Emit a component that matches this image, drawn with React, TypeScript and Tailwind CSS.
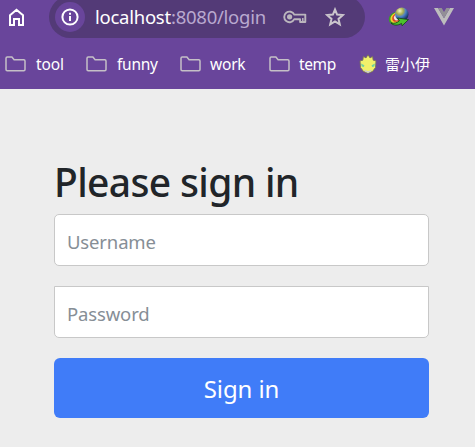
import type { ReactNode } from 'react';

const uiFont = "font-['Noto_Sans','Noto_Sans_CJK_SC',sans-serif]";

function HomeIcon() {
  return (
    <svg className="block shrink-0" width="17" height="19" viewBox="0 0 17 19" fill="none" stroke="#fff" strokeWidth="2">
      <path d="M2 7.2 8.5 1.8 15 7.2v9.8h-4v-6H6v6H2z" />
    </svg>
  );
}

function InfoIcon() {
  return (
    <svg className="block" width="18" height="18" viewBox="0 0 18 18" fill="none">
      <circle cx="9" cy="9" r="7.6" stroke="#fff" strokeWidth="2" />
      <path d="M9 7.9v5M9 4.8v1.9" stroke="#fff" strokeWidth="2" />
    </svg>
  );
}

function KeyIcon() {
  return (
    <svg className="block shrink-0" width="24" height="14" viewBox="0 0 24 14" fill="none" stroke="#bbb6bd" strokeWidth="1.9">
      <path d="M11.3 4.6h11v7.4h-5.2V9.2h-5.8A5.3 5.3 0 1 1 11.3 4.6z" strokeLinejoin="round" />
      <circle cx="6.6" cy="6.8" r="2.6" fill="#bbb6bd" stroke="none" />
      <path d="M19.8 8v4" strokeWidth="1.5" />
    </svg>
  );
}

function StarIcon() {
  return (
    <svg className="block shrink-0" width="20" height="20" viewBox="0 0 20 20" fill="none" stroke="#cac5cc" strokeWidth="2">
      <path d="m10 2.5 2.1 5.1 5.8.5-4.4 3.8 1.3 5.5-4.8-2.9-4.8 2.9 1.3-5.5-4.4-3.8 5.8-.5z" />
    </svg>
  );
}

function GlobeIcon() {
  return (
    <svg className="block shrink-0" width="22" height="20" viewBox="0 0 22 20">
      <defs>
        <radialGradient id="globe" cx="35%" cy="25%" r="75%">
          <stop offset="0" stopColor="#f2f5c8" />
          <stop offset=".35" stopColor="#a9ae50" />
          <stop offset=".6" stopColor="#4a7fc8" />
          <stop offset="1" stopColor="#142c58" />
        </radialGradient>
      </defs>
      <g fill="none">
        <ellipse cx="7.4" cy="11.4" rx="7" ry="6" transform="rotate(-40 7.4 11.4)" fill="#3d9a2a" />
        <ellipse cx="8" cy="11" rx="6" ry="5" transform="rotate(-40 8 11)" fill="#f1d52c" />
        <ellipse cx="8.7" cy="10.5" rx="4.9" ry="3.9" transform="rotate(-40 8.7 10.5)" fill="#d9452c" />
        <ellipse cx="9.4" cy="10" rx="3.8" ry="2.8" transform="rotate(-40 9.4 10)" fill="#f3e3dc" />
      </g>
      <circle cx="13.8" cy="7.2" r="6.7" fill="url(#globe)" />
      <path d="M3 16c3 .6 6 .1 8.4-2.2L9.6 11l10.9 1.6-6.4 6.2-.6-2.4C9.8 18.8 5.6 18.7 3 16z" fill="#4cc32c" stroke="#12401a" strokeWidth=".8" />
    </svg>
  );
}

function VueIcon() {
  return (
    <svg className="block shrink-0" width="20" height="18" viewBox="0 0 20 18">
      <path d="M0 0h4l6 10.3L16 0h4L10 17.5z" fill="#bdbdbd" />
      <path d="M4 0h3.7L10 4l2.3-4H16l-6 10.3z" fill="#929096" />
    </svg>
  );
}

function FolderIcon() {
  return (
    <svg className="block" width="21" height="16" viewBox="0 0 21 16" fill="none" stroke="#c5c0c7" strokeWidth="1.5">
      <path d="M1 2.2Q1 1 2.2 1h4.7l2.2 2.7h9.7Q20 3.7 20 4.9v8.7q0 1.2-1.2 1.2H2.2Q1 14.8 1 13.6z" />
    </svg>
  );
}

function FlameIcon() {
  return (
    <svg className="block" width="18" height="20" viewBox="0 0 18 20">
      <path d="m9 .7 2 3.2 2.6-1.5.6 3.8 2.8.6-.5 6.7-3 4L9 19.2l-4.5-1.7-3-4L1 6.8l2.8-.6.6-3.8L7 3.9z" fill="#f1f06a" stroke="#77705b" strokeWidth=".9" />
      <path d="m2 9.6 3.4 1.6-.5 1.9-2.2-.5zM16 9.6l-3.4 1.6.5 1.9 2.2-.5z" fill="#6ed0a0" />
      <path d="m5 15.8 4 1.4 4-1.4-1.4 2L9 19l-2.6-1.2z" fill="#c8cad0" />
    </svg>
  );
}

function Bookmark({ width, spacing, icon, children }: { width: string; spacing: string; icon: ReactNode; children: ReactNode }) {
  return (
    <div className={`flex shrink-0 items-center ${width}`}>
      {icon}
      <span className={`whitespace-nowrap leading-5 text-white ${spacing}`}>{children}</span>
    </div>
  );
}

export default function App() {
  return (
    <div className={`h-[447px] w-[475px] overflow-hidden bg-[#ededed] ${uiFont}`}>
      <header className="h-[89px] bg-[#69459b]">
        <div className="flex h-[38px] items-end overflow-hidden">
          <div className="flex h-[42px] w-[49px] shrink-0 items-center pl-2">
            <HomeIcon />
          </div>
          <div className="flex h-[42px] w-[316px] shrink-0 items-center rounded-full bg-[#533a77] pl-1.5">
            <div className="flex size-[30px] shrink-0 items-center justify-center rounded-full bg-[#69459b]">
              <InfoIcon />
            </div>
            <div className="ml-[10px] w-[188px] shrink-0 whitespace-nowrap text-[18.5px] leading-6 tracking-[-0.25px] text-[#b9a9cf]">
              <span className="text-white">localhost</span>:8080/login
            </div>
            <KeyIcon />
            <div className="ml-[18px]">
              <StarIcon />
            </div>
          </div>
          <div className="flex h-[42px] items-center gap-[24px] pl-[23px]">
            <GlobeIcon />
            <VueIcon />
          </div>
        </div>
        <nav className="flex h-[51px] items-center pl-[5px]">
          <Bookmark width="w-[81px]" spacing="ml-[10px] text-[15.5px] tracking-[-0.1px]" icon={<FolderIcon />}>tool</Bookmark>
          <Bookmark width="w-[94px]" spacing="ml-[10px] text-[15.5px] tracking-[-0.25px]" icon={<FolderIcon />}>funny</Bookmark>
          <Bookmark width="w-[89px]" spacing="ml-[9px] text-[15.5px] tracking-[-0.2px]" icon={<FolderIcon />}>work</Bookmark>
          <Bookmark width="w-[90px]" spacing="ml-[9px] text-[15.5px] tracking-[-0.4px]" icon={<FolderIcon />}>temp</Bookmark>
          <Bookmark width="w-[80px]" spacing="ml-[8px] text-[15px]" icon={<FlameIcon />}>雷小伊</Bookmark>
        </nav>
      </header>
      <main className="ml-[54px] w-[375px] pt-[69px]">
        <h1 className="mb-2 h-12 whitespace-nowrap text-[39px] font-medium leading-[48px] tracking-[-0.65px] text-[#212529]">Please sign in</h1>
        <form>
          <input
            type="text"
            placeholder="Username"
            className="mb-5 block h-[52px] w-full rounded-[5px] border border-[#c8c8c8] bg-white px-3 pt-0.5 text-[18.5px] tracking-[-0.15px] outline-none placeholder:text-[#868e96]"
          />
          <input
            type="password"
            placeholder="Password"
            className="mb-5 block h-[52px] w-full rounded-b-[5px] border border-[#c8c8c8] bg-white px-3 pt-0.5 text-[18.5px] tracking-[-0.15px] outline-none placeholder:text-[#868e96]"
          />
          <button type="button" className="block h-[60px] w-full rounded-[6px] bg-[#407cf8] pt-0.5 text-[24px] tracking-[-0.1px] text-white">
            Sign in
          </button>
        </form>
      </main>
    </div>
  );
}
